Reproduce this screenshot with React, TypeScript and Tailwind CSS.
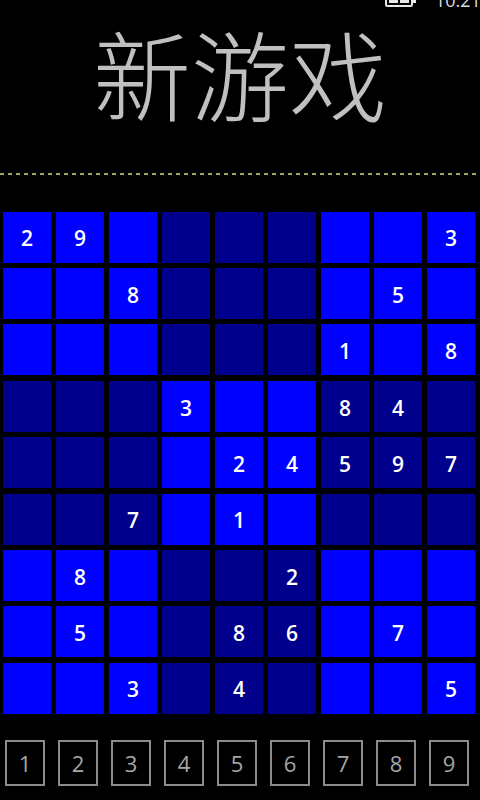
import React from 'react'

const puzzle: string[] = [
  '29______3',
  '__8____5_',
  '______1_8',
  '___3__84_',
  '____24597',
  '__7_1____',
  '_8___2___',
  '_5__86_7_',
  '__3_4___5',
]

// 3x3 boxes alternate bright / dark like a checkerboard
function isBright(row: number, col: number) {
  const br = Math.floor(row / 3)
  const bc = Math.floor(col / 3)
  return (br + bc) % 2 === 0
}

function StatusBar() {
  return (
    <div className="h-[8px] overflow-hidden flex items-end justify-end">
      <svg width="32" height="14" viewBox="0 0 32 14" className="mr-[18px] mb-[1px]">
        <rect x="1" y="1" width="26" height="12" rx="1.5" fill="none" stroke="#e8e8e8" strokeWidth="2" />
        <rect x="4" y="4" width="9" height="6" fill="#e8e8e8" />
        <rect x="15" y="4" width="9" height="6" fill="#e8e8e8" />
        <rect x="28" y="4" width="3" height="6" fill="#e8e8e8" />
      </svg>
      <span
        className="text-[18px] leading-none text-[#dcdcdc] mb-[-1px] w-[45px] whitespace-nowrap"
        style={{ fontFamily: '"Open Sans", sans-serif' }}
      >
        10:21
      </span>
    </div>
  )
}

export default function App() {
  return (
    <div
      className="w-[480px] h-[800px] bg-black overflow-hidden flex flex-col"
      style={{ fontFamily: '"Open Sans", "Noto Sans CJK SC", sans-serif' }}
    >
      <StatusBar />

      {/* Title */}
      <div
        className="mt-[5px] text-center text-[98px] leading-[1.2] text-[#c0c0c0] font-light"
        style={{ fontFamily: '"Noto Sans CJK SC", sans-serif' }}
      >
        新游戏
      </div>

      {/* Dashed separator */}
      <div className="mt-[42px] h-[2px] w-full bg-[repeating-linear-gradient(90deg,#a8a46c_0px,#a8a46c_4px,transparent_4px,transparent_8px)]" />

      {/* Board */}
      <div className="mt-[37px] pl-[3px] grid grid-cols-[repeat(9,48px)] gap-x-[5px] gap-y-[5.4px]">
        {puzzle.map((line, r) =>
          line.split('').map((ch, c) => (
            <div
              key={`${r}-${c}`}
              className={`h-[51px] flex items-center justify-center pt-[4px] text-white text-[21px] font-semibold ${
                isBright(r, c) ? 'bg-[#0000ff]' : 'bg-[#00008c]'
              }`}
            >
              {ch === '_' ? '' : ch}
            </div>
          ))
        )}
      </div>

      {/* Number picker */}
      <div className="mt-[26px] pl-[5px] grid grid-cols-[repeat(9,40px)] gap-x-[13px]">
        {[1, 2, 3, 4, 5, 6, 7, 8, 9].map((n) => (
          <div
            key={n}
            className="h-[46px] border-2 border-[#8c8c8c] flex items-center justify-center pt-[2px] text-[22px] text-[#a6a6a6]"
          >
            {n}
          </div>
        ))}
      </div>
    </div>
  )
}
